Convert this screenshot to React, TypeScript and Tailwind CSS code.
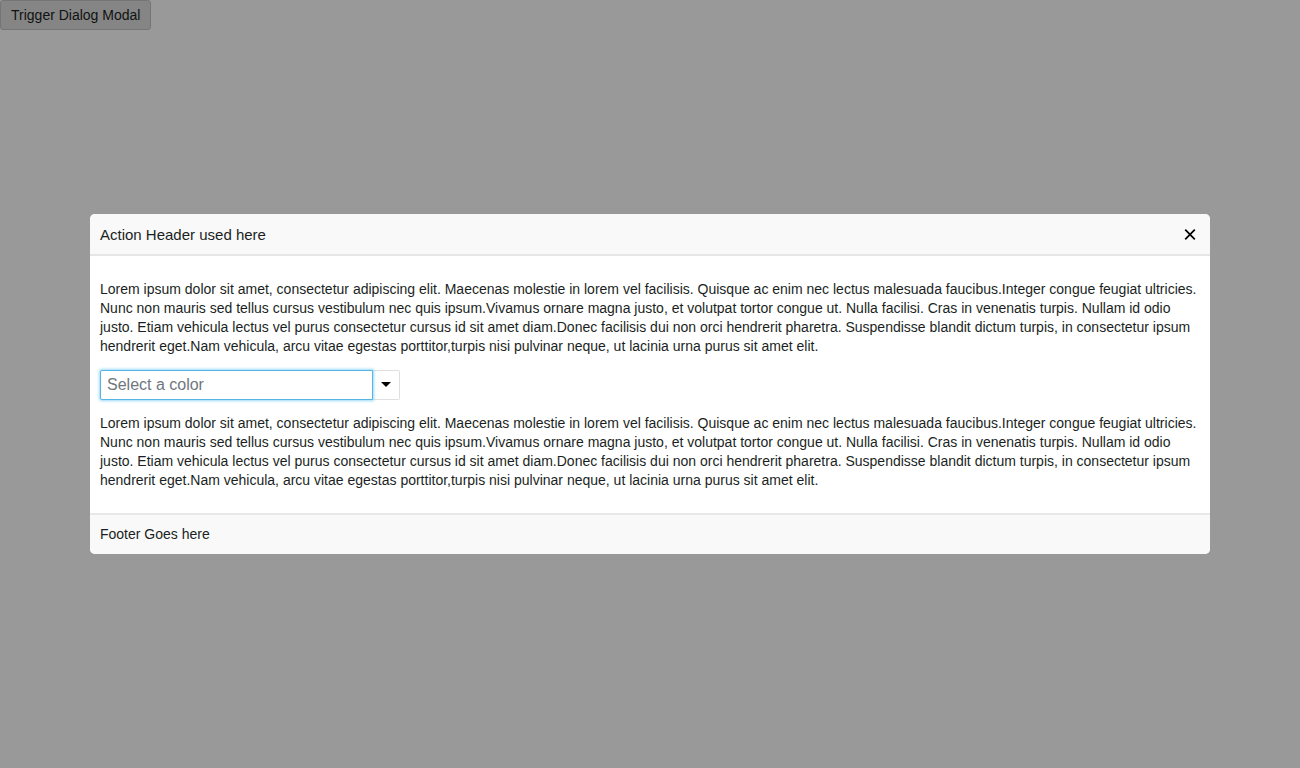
import { useState } from "react";

const LOREM =
  "Lorem ipsum dolor sit amet, consectetur adipiscing elit. Maecenas molestie in lorem vel facilisis. Quisque ac enim nec lectus malesuada faucibus.Integer congue feugiat ultricies. Nunc non mauris sed tellus cursus vestibulum nec quis ipsum.Vivamus ornare magna justo, et volutpat tortor congue ut. Nulla facilisi. Cras in venenatis turpis. Nullam id odio justo. Etiam vehicula lectus vel purus consectetur cursus id sit amet diam.Donec facilisis dui non orci hendrerit pharetra. Suspendisse blandit dictum turpis, in consectetur ipsum hendrerit eget.Nam vehicula, arcu vitae egestas porttitor,turpis nisi pulvinar neque, ut lacinia urna purus sit amet elit.";

function ColorCombobox() {
  const [color, setColor] = useState("");
  return (
    <div className="flex h-[30px] w-[300px] max-w-full">
      <input
        type="text"
        role="combobox"
        aria-label="Color"
        aria-expanded={false}
        value={color}
        onChange={(event) => setColor(event.target.value)}
        placeholder="Select a color"
        className="z-10 min-w-0 flex-1 rounded-l-xs border border-[#56b4e6] bg-white px-1.5 text-base text-[#1b1f23] shadow-[0_0_3px_1px_#9bd9f7] outline-none placeholder:text-[#6f777d]"
      />
      <button
        type="button"
        aria-label="Show colors"
        className="flex w-[27px] items-center justify-center rounded-r-xs border border-l-0 border-[#dfdfdf] bg-white"
      >
        <svg width="10" height="6" viewBox="0 0 10 6" aria-hidden="true">
          <path d="M0 0H10L5 5Z" fill="#000" />
        </svg>
      </button>
    </div>
  );
}

export default function App() {
  const [open, setOpen] = useState(true);
  return (
    <div className="min-h-screen bg-white font-['Liberation_Sans',Arial,sans-serif] text-sm text-[#1b1f23]">
      <button
        type="button"
        onClick={() => setOpen(true)}
        className="h-[30px] rounded-[3px] border border-[#c4c4c4] bg-[#dedede] px-2.5"
      >
        Trigger Dialog Modal
      </button>
      {open && (
        <div className="fixed inset-0 flex items-center justify-center bg-black/40">
          <section
            role="dialog"
            aria-modal="true"
            aria-labelledby="dialog-title"
            className="w-full max-w-[1120px] overflow-hidden rounded-[5px] bg-white"
          >
            <header className="flex h-[42px] items-center justify-between border-b-2 border-[#e6e6e6] bg-[#f9f9f9] px-2.5 pt-0.5">
              <h1 id="dialog-title" className="text-[15px]">
                Action Header used here
              </h1>
              <button
                type="button"
                aria-label="Close"
                onClick={() => setOpen(false)}
                className="flex size-5 items-center justify-center"
              >
                <svg width="12" height="12" viewBox="0 0 12 12" aria-hidden="true">
                  <path d="M1.2 .7L10.8 10.3M10.8 .7L1.2 10.3" stroke="#000" strokeWidth="1.7" />
                </svg>
              </button>
            </header>
            <div className="flex flex-col gap-3.5 px-2.5 pt-6 pb-[23px] leading-[19px]">
              <p>{LOREM}</p>
              <ColorCombobox />
              <p>{LOREM}</p>
            </div>
            <footer className="flex h-[41px] items-center border-t-2 border-[#e8e8e8] bg-[#f9f9f9] px-2.5 pb-0.5">
              Footer Goes here
            </footer>
          </section>
        </div>
      )}
    </div>
  );
}
